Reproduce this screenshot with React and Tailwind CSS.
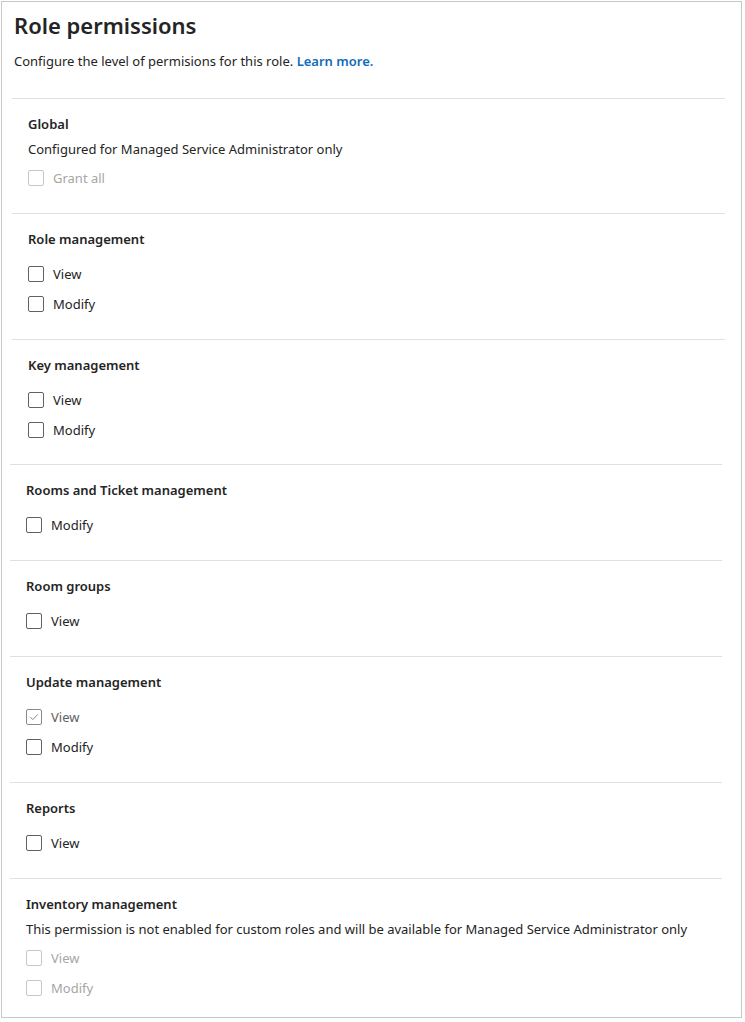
import React from "react"

const sections = [
  { title: "Role management", items: [{ label: "View" }, { label: "Modify" }], shift: true },
  {
    title: "Key management",
    items: [{ label: "View" }, { label: "Modify" }],
    shift: true,
    tight: true
  },
  { title: "Rooms and Ticket management", items: [{ label: "Modify" }] },
  { title: "Room groups", items: [{ label: "View" }] },
  {
    title: "Update management",
    items: [{ label: "View", checked: true }, { label: "Modify" }]
  },
  { title: "Reports", items: [{ label: "View" }] }
]

const Checkbox = ({ label, checked, disabled }) => {
  let box = "border-[#616161]"
  let text = "text-[#242424]"
  if (disabled) {
    box = "border-[#c7c7c7]"
    text = "text-[#a6a6a6]"
  } else if (checked) {
    box = "border-[#8a8a8a]"
    text = "text-[#616161]"
  }
  return (
    <div className="flex h-[30px] items-center">
      <span
        className={`flex h-4 w-4 items-center justify-center rounded-[2px] border bg-white ${box}`}
      >
        {checked && (
          <svg width="12" height="12" viewBox="0 0 12 12" fill="none">
            <path
              d="M2.5 6.3 L4.8 8.6 L9.6 3.6"
              stroke="#8a8a8a"
              strokeWidth="1"
              strokeLinecap="round"
              strokeLinejoin="round"
            />
          </svg>
        )}
      </span>
      <span className={`ml-[9px] text-[13px] leading-5 ${text}`}>{label}</span>
    </div>
  )
}

const Section = ({ title, items, shift, tight }) => (
  <div
    className={`border-t border-[#e0e0e0] pt-[15px] pl-4 ${tight ? "pb-[19px]" : "pb-5"} ${
      shift ? "ml-[10px] mr-[16px]" : "ml-[8px] mr-[19px]"
    }`}
  >
    <div className="text-[13px] font-semibold leading-5 text-[#242424]">{title}</div>
    <div className="mt-[10px]">
      {items.map((it, i) => (
        <Checkbox key={i} {...it} />
      ))}
    </div>
  </div>
)

export default function App() {
  return (
    <div className="bg-white p-px" style={{ fontFamily: '"Noto Sans", "Open Sans", sans-serif' }}>
      <div className="w-[741px] border border-[#c8c8c8] bg-white">
        <div className="h-[96px] pl-3 pt-[7px]">
          <h1 className="text-[22px] font-semibold leading-8 text-[#242424]">
            Role permissions
          </h1>
          <p className="mt-[10px] text-[13px] leading-5 text-[#242424]">
            Configure the level of permisions for this role.{" "}
            <a href="#" className="font-semibold text-[#0f6cbd]">
              Learn more.
            </a>
          </p>
        </div>

        <div className="ml-[10px] mr-[16px] border-t border-[#e0e0e0] pt-[15px] pb-5 pl-4">
          <div className="text-[13px] font-semibold leading-5 text-[#242424]">Global</div>
          <div className="mt-[5px] text-[13px] leading-5 text-[#242424]">
            Configured for Managed Service Administrator only
          </div>
          <div className="mt-[4px]">
            <Checkbox label="Grant all" disabled />
          </div>
        </div>

        {sections.map(s => (
          <Section key={s.title} {...s} />
        ))}

        <div className="ml-[8px] mr-[19px] border-t border-[#e0e0e0] pt-[15px] pb-[14px] pl-4">
          <div className="text-[13px] font-semibold leading-5 text-[#242424]">
            Inventory management
          </div>
          <div className="mt-[5px] text-[13px] leading-5 text-[#242424]">
            This permission is not enabled for custom roles and will be available for Managed
            Service Administrator only
          </div>
          <div className="mt-[4px]">
            <Checkbox label="View" disabled />
            <Checkbox label="Modify" disabled />
          </div>
        </div>
      </div>
    </div>
  )
}
